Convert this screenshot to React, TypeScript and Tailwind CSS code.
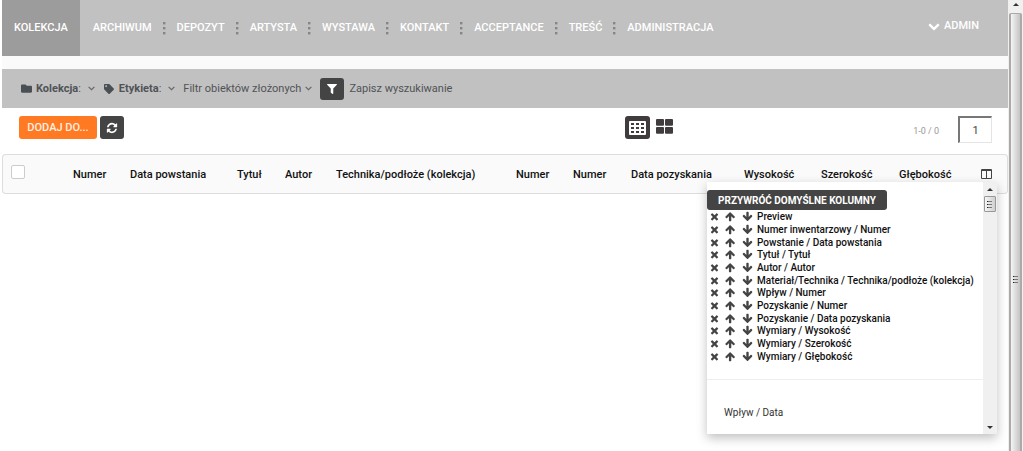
import { useState } from 'react';
import { FaFilter, FaFolder, FaTag } from 'react-icons/fa';

const navItems = ['Archiwum', 'Depozyt', 'Artysta', 'Wystawa', 'Kontakt', 'Acceptance', 'Treść', 'Administracja'];

const tableColumns = [
  { label: 'Numer', width: 'w-[57px]' },
  { label: 'Data powstania', width: 'w-[107px]' },
  { label: 'Tytuł', width: 'w-12' },
  { label: 'Autor', width: 'w-[51px]' },
  { label: 'Technika/podłoże (kolekcja)', width: '' },
  { label: 'Numer', width: 'w-[57px]' },
  { label: 'Numer', width: 'w-[58px]' },
  { label: 'Data pozyskania', width: 'w-[113px]' },
  { label: 'Wysokość', width: 'w-[77px]' },
  { label: 'Szerokość', width: 'w-[78px]' },
  { label: 'Głębokość', width: 'w-[82px]' },
];

const defaultColumns = [
  'Preview',
  'Numer inwentarzowy / Numer',
  'Powstanie / Data powstania',
  'Tytuł / Tytuł',
  'Autor / Autor',
  'Materiał/Technika / Technika/podłoże (kolekcja)',
  'Wpływ / Numer',
  'Pozyskanie / Numer',
  'Pozyskanie / Data pozyskania',
  'Wymiary / Wysokość',
  'Wymiary / Szerokość',
  'Wymiary / Głębokość',
];

const icons = {
  up: 'M1611 971q0 51-37 90l-75 75q-38 38-91 38-54 0-90-38l-294-293v704q0 52-37.5 84.5t-90.5 32.5h-128q-53 0-90.5-32.5t-37.5-84.5v-704l-294 293q-36 38-90 38t-90-38l-75-75q-38-38-38-90 0-53 38-91l651-651q35-37 90-37 54 0 91 37l651 651q37 39 37 91z',
  down: 'M1675 832q0 53-37 90l-651 652q-39 37-91 37-53 0-90-37l-651-652q-38-36-38-90 0-53 38-91l74-75q39-37 91-37 53 0 90 37l294 294v-704q0-52 38-90t90-38h128q52 0 90 38t38 90v704l294-294q37-37 90-37 52 0 91 37l75 75q37 39 37 91z',
  chevron: 'M1683 808l-742 741q-19 19-45 19t-45-19l-742-741q-19-19-19-45.5t19-45.5l166-165q19-19 45-19t45 19l531 531 531-531q19-19 45-19t45 19l166 165q19 19 19 45.5t-19 45.5z',
  times: 'M1490 1322q0 40-28 68l-136 136q-28 28-68 28t-68-28l-294-294-294 294q-28 28-68 28t-68-28l-136-136q-28-28-28-68t28-68l294-294-294-294q-28-28-28-68t28-68l136-136q28-28 68-28t68 28l294 294 294-294q28-28 68-28t68 28l136 136q28 28 28 68t-28 68l-294 294 294 294q28 28 28 68z',
  refresh: 'M1639 1056q0 5-1 7-64 268-268 434.5t-478 166.5q-146 0-282.5-55t-243.5-157l-129 129q-19 19-45 19t-45-19-19-45v-448q0-26 19-45t45-19h448q26 0 45 19t19 45-19 45l-137 137q71 66 161 102t187 36q134 0 250-65t186-179q11-17 53-117 8-23 30-23h192q13 0 22.5 9.5t9.5 22.5zm25-800v448q0 26-19 45t-45 19h-448q-26 0-45-19t-19-45 19-45l138-138q-148-137-349-137-134 0-250 65t-186 179q-11 17-53 117-8 23-30 23h-199q-13 0-22.5-9.5t-9.5-22.5v-7q65-268 270-434.5t480-166.5q146 0 284 55.5t245 156.5l130-129q19-19 45-19t45 19 19 45z',
};

function Icon({ name, size }: { name: keyof typeof icons; size: number }) {
  return (
    <svg width={size} height={size} viewBox="0 0 1792 1792" fill="currentColor">
      <path d={icons[name]} />
    </svg>
  );
}

function Dots() {
  return (
    <svg width="3" height="13" viewBox="0 0 3 13" fill="#858585" className="shrink-0">
      <rect x="0" y="0" width="2.4" height="2.4" />
      <rect x="0" y="5" width="2.4" height="2.4" />
      <rect x="0" y="10" width="2.4" height="2.4" />
    </svg>
  );
}

function Caret() {
  return (
    <svg width="7" height="5" viewBox="0 0 7 5" fill="none" stroke="#666" strokeWidth="1.2">
      <path d="M0.6 0.8 3.5 3.7 6.4 0.8" />
    </svg>
  );
}

function Grip() {
  return (
    <svg width="6" height="8" viewBox="0 0 6 8">
      <path d="M0 1.5h5M0 4.5h5M0 7.5h5" stroke="#777" strokeWidth="1" />
      <path d="M0 1.5h1M0 4.5h1M0 7.5h1" stroke="#222" strokeWidth="1" />
    </svg>
  );
}

function TopNav() {
  return (
    <header className="flex h-14 items-stretch bg-[#c1c1c1] text-[11px] font-medium text-white uppercase">
      <nav className="flex items-stretch">
        <a href="#kolekcja" className="mr-0.5 flex items-center bg-[#9c9c9c] px-3">Kolekcja</a>
        {navItems.map((item, i) => (
          <div key={item} className="flex items-center">
            {i > 0 && <Dots />}
            <a href={`#${item}`} className="px-[11px]">{item}</a>
          </div>
        ))}
      </nav>
      <button className="mr-[29px] mb-1 ml-auto flex items-center gap-1 uppercase">
        <Icon name="chevron" size={12} />
        Admin
      </button>
    </header>
  );
}

function FilterBar() {
  return (
    <div className="mt-[13px] flex h-[39px] items-center bg-[#c1c1c1] pl-[19px] text-[11px] leading-[17px] text-[#505356]">
      <button className="flex items-center">
        <FaFolder size={11} className="mr-1 text-[#4a4f53]" />
        <span><b className="font-bold">Kolekcja</b>:</span>
        <span className="ml-[7px]"><Caret /></span>
      </button>
      <button className="ml-[9px] flex items-center">
        <FaTag size={10} className="mr-[5px] text-[#4a4f53]" />
        <span><b className="font-bold">Etykieta</b>:</span>
        <span className="ml-[7px]"><Caret /></span>
      </button>
      <button className="ml-2 flex items-center gap-1">
        Filtr obiektów złożonych
        <Caret />
      </button>
      <button aria-label="Filtruj" className="ml-2 flex h-[22px] w-6 items-center justify-center rounded-[3px] bg-[#444] text-white">
        <FaFilter size={10} />
      </button>
      <a href="#zapisz" className="ml-[5px]">Zapisz wyszukiwanie</a>
    </div>
  );
}

function Toolbar() {
  const [page, setPage] = useState('1');

  return (
    <div className="flex h-[46px] items-start bg-white pt-2 pr-4 pl-[17px]">
      <button className="flex h-[23px] w-[78px] items-center justify-center rounded-[3px] bg-[#ff7a22] text-[11px] leading-[17px] font-medium text-[#fff0e4]">
        DODAJ DO...
      </button>
      <button aria-label="Odśwież" className="ml-[3px] flex h-[23px] w-6 items-center justify-center rounded-[3px] bg-[#444] text-white">
        <Icon name="refresh" size={12} />
      </button>
      <div className="ml-auto flex items-start">
        <button aria-label="Widok tabeli" className="flex h-[23px] w-[25px] items-center justify-center rounded-[3px] bg-[#403c3d]">
          <svg width="17" height="14" viewBox="0 0 17 14">
            <rect width="17" height="14" rx="1" fill="#fff" />
            <path d="M2 3h3M7 3h3M12 3h3M2 7h3M7 7h3M12 7h3M2 11h3M7 11h3M12 11h3" stroke="#403c3d" strokeWidth="2" />
          </svg>
        </button>
        <button aria-label="Widok kafelków" className="mt-[3px] ml-1.5">
          <svg width="17" height="15" viewBox="0 0 17 15" fill="#403c3d">
            <rect width="8" height="6.8" rx="1" />
            <rect x="9" width="8" height="6.8" rx="1" />
            <rect y="8" width="8" height="6.8" rx="1" />
            <rect x="9" y="8" width="8" height="6.8" rx="1" />
          </svg>
        </button>
      </div>
      <span className="mt-[9px] ml-60 text-[9px] text-[#999]">1-0 / 0</span>
      <input
        aria-label="Strona"
        value={page}
        onChange={(e) => setPage(e.target.value)}
        className="ml-[19px] h-[27px] w-[34px] border-t-2 border-r border-b border-l-2 border-t-[#777] border-r-[#e5e5e5] border-b-[#e5e5e5] border-l-[#777] text-center text-[11px] text-[#444]"
      />
    </div>
  );
}

function ColumnMenu() {
  return (
    <div className="absolute top-7 right-[11px] flex w-[290px] bg-white shadow-[0_4px_10px_rgba(0,0,0,0.25)]">
      <div className="min-w-0 flex-1 pt-2 pb-[13px]">
        <button className="flex h-5 w-[180px] items-center justify-center rounded-[3px] bg-[#444] text-[10px] font-bold text-white">
          PRZYWRÓĆ DOMYŚLNE KOLUMNY
        </button>
        <ul className="text-[10px] font-medium text-[#111]">
          {defaultColumns.map((name) => (
            <li key={name} className="flex h-[13px] items-center pl-0.5 whitespace-nowrap nth-[3n]:h-3">
              <button aria-label={`Usuń ${name}`} className="w-4 shrink-0 text-[#444]"><Icon name="times" size={11} /></button>
              <button aria-label={`W górę ${name}`} className="w-[17px] shrink-0 text-[#444]"><Icon name="up" size={11} /></button>
              <button aria-label={`W dół ${name}`} className="w-[15px] shrink-0 text-[#444]"><Icon name="down" size={11} /></button>
              {name}
            </li>
          ))}
        </ul>
        <div className="mt-[17px] border-t border-[#eee] pt-[25px] pl-[17px]">
          <a href="#wplyw-data" className="block text-[10px] leading-4 text-[#333]">Wpływ / Data</a>
        </div>
      </div>
      <div aria-hidden="true" className="flex w-3.5 flex-col items-center bg-[#f0f0f0]">
        <svg width="6" height="14" viewBox="0 0 6 14" fill="#333"><path d="M0 9 3 6 6 9z" /></svg>
        <div className="flex h-4 w-3 items-center justify-center rounded-[1px] border border-[#999] bg-linear-to-r from-[#f5f5f5] to-[#d0d0d0]">
          <Grip />
        </div>
        <svg width="6" height="12" viewBox="0 0 6 12" fill="#333" className="mt-auto"><path d="M0 4 3 7 6 4z" /></svg>
      </div>
    </div>
  );
}

function ResultTable() {
  const [menuOpen, setMenuOpen] = useState(true);

  return (
    <div className="relative">
      <table className="w-full table-fixed border-separate border-spacing-0 text-left text-[11px] leading-[17px] text-[#111]">
        <thead>
          <tr className="h-10 bg-[#fafafa] [&>th]:border-y [&>th]:border-[#ddd]">
            <th className="w-[71px] rounded-l-sm border-l pl-2 align-middle">
              <input type="checkbox" aria-label="Zaznacz wszystko" className="mb-1 block size-3.5 appearance-none rounded-xs border border-[#ccc] bg-white" />
            </th>
            {tableColumns.map((col, i) => (
              <th key={i} className={`${col.width} p-0 font-medium whitespace-nowrap`}>{col.label}</th>
            ))}
            <th className="w-[27px] rounded-r-sm border-r p-0">
              <button aria-label="Kolumny" onClick={() => setMenuOpen(!menuOpen)} className="block">
                <svg width="11" height="10" viewBox="0 0 11 10" fill="none" stroke="#444">
                  <path d="M0.5 0.5h10v9H0.5zM5.5 0.5v9M0.5 1.5h10" />
                </svg>
              </button>
            </th>
          </tr>
        </thead>
      </table>
      {menuOpen && <ColumnMenu />}
    </div>
  );
}

function PageScrollbar() {
  return (
    <div aria-hidden="true" className="sticky top-0 flex h-screen w-[15px] shrink-0 flex-col items-center bg-[#f0f0f0]">
      <svg width="6" height="13" viewBox="0 0 6 13" fill="#333" className="shrink-0"><path d="M0 6 3 3 6 6z" /></svg>
      <div className="flex w-[13px] flex-1 items-center justify-center rounded-t-xs border-x-2 border-t border-[#aaa] bg-linear-to-r from-[#f5f5f5] to-[#c4c4c4] pt-[92px]">
        <Grip />
      </div>
    </div>
  );
}

export default function App() {
  return (
    <div className="flex min-h-screen items-start bg-white pl-0.5 font-[Roboto,'Liberation_Sans',sans-serif]">
      <div className="min-w-0 flex-1">
        <div className="bg-[#fafafa]">
          <TopNav />
          <FilterBar />
        </div>
        <Toolbar />
        <ResultTable />
      </div>
      <PageScrollbar />
    </div>
  );
}
